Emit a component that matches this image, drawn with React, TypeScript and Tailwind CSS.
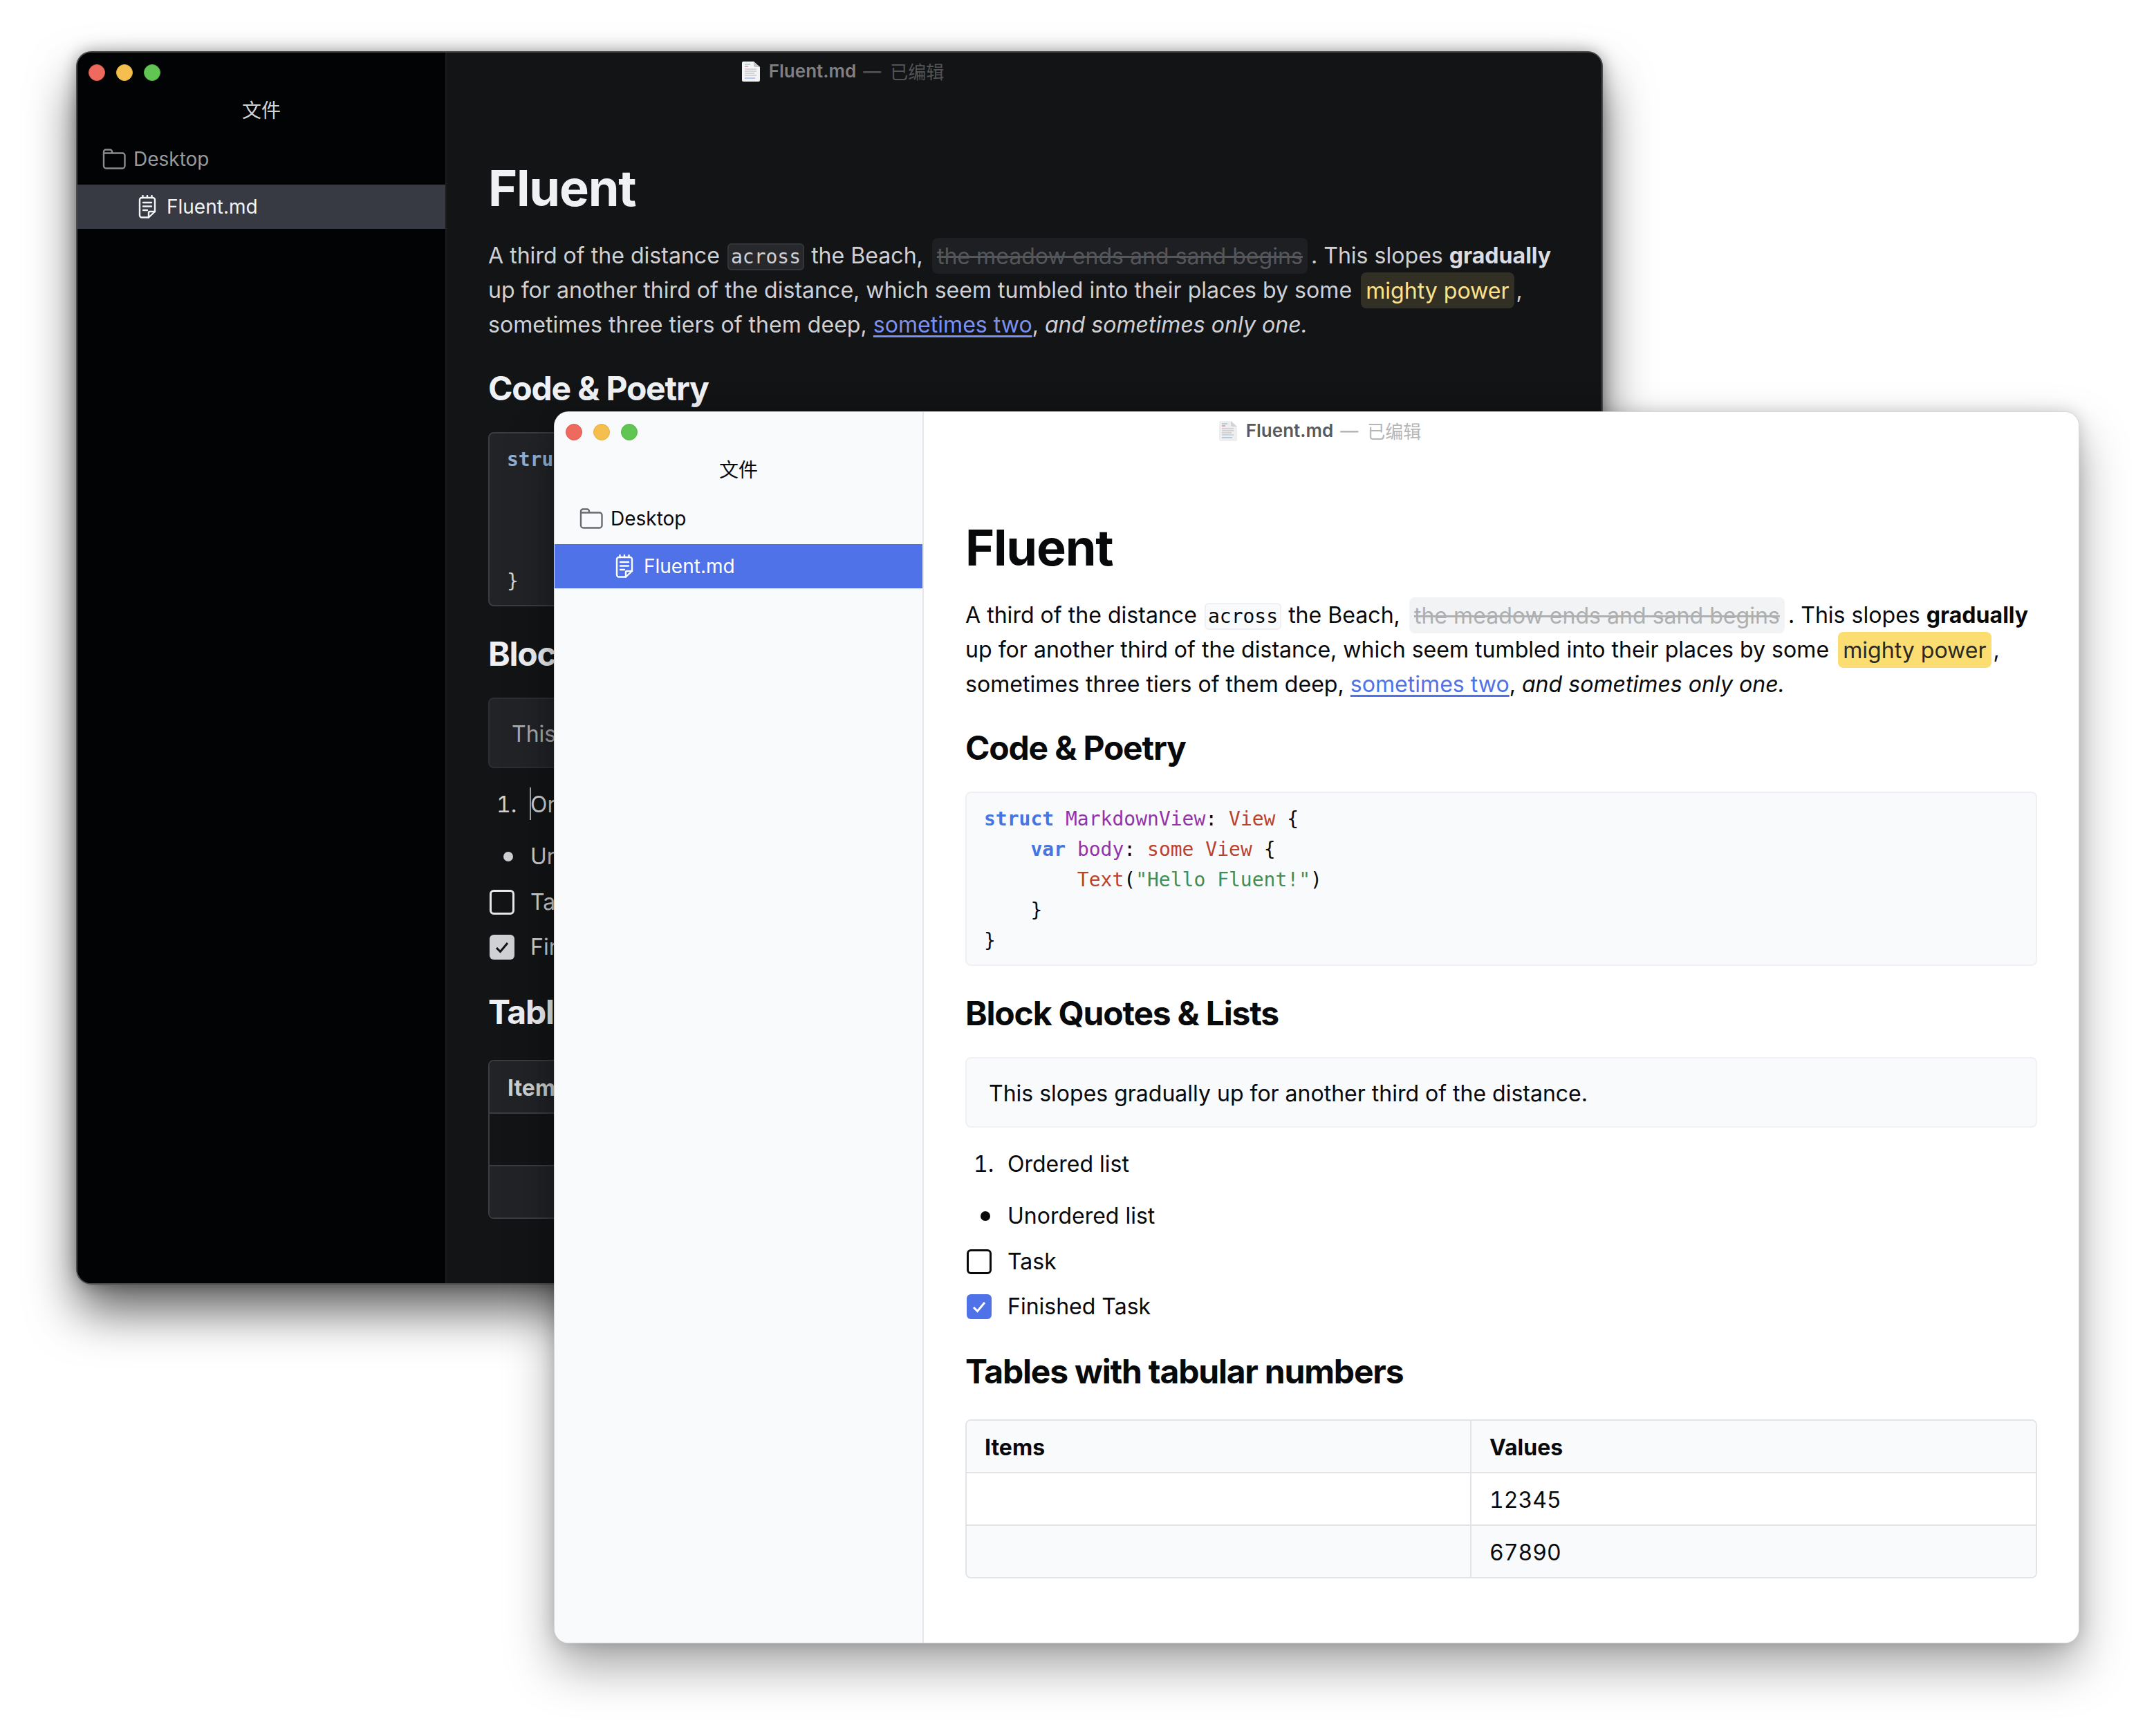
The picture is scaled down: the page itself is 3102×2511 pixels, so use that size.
import React from "react";

type Theme = "dark" | "light";

const styles = {
  dark: {
    win: "bg-[#131416] shadow-[0_40px_70px_rgba(0,0,0,0.62),0_0_24px_rgba(0,0,0,0.4)] ring-2 ring-[#4a4b4d]",
    side: "bg-[#020305] text-[#d2d3d5]",
    sideBorder: "border-[#1a1b1d]",
    muted: "text-[#98999b]",
    folder: "#8b8c8e",
    row: "bg-[#383a43] text-[#f2f3f5]",
    titleStrong: "text-[#808082]",
    titleMuted: "text-[#525356]",
    heading: "text-[#f0f1f4]",
    body: "text-[#cfd0d3]",
    strong: "text-[#dcdde0]",
    code: "bg-[#26282c] border-[#33353a] text-[#cfd0d3]",
    del: "bg-[#1e1f22] text-[#55565a]",
    mark: "bg-[#322f24] text-[#fbe28c]",
    link: "text-[#7b90ee] decoration-[#7b90ee]",
    pre: "bg-[#212327] border-[#3a3c42] text-[#cfd0d3]",
    kw: "font-bold text-[#8fb0d8]",
    type: "text-[#c99bd8]",
    ref: "text-[#e08f80]",
    str: "text-[#8cc09a]",
    quote: "bg-[#212327] border-[#2c2e33] text-[#a9aaad]",
    box: "border-[#e8e9ea]",
    checked: "bg-[#d0d1d4] text-[#131416]",
    table: "border-[#3a3c42]",
    head: "bg-[#212327]",
    alt: "bg-[#212327]",
    plain: "bg-[#131416]",
  },
  light: {
    win: "bg-white shadow-[0_34px_70px_rgba(0,0,0,0.36),0_0_24px_rgba(0,0,0,0.18)] ring-1 ring-[#d5d6d9]",
    side: "bg-[#f9fafc] text-[#08090b]",
    sideBorder: "border-[#e6e7ea]",
    muted: "text-[#08090b]",
    folder: "#6a6b70",
    row: "bg-[#4f72e9] text-white",
    titleStrong: "text-[#5a5a5d]",
    titleMuted: "text-[#b5b6b8]",
    heading: "text-[#08090b]",
    body: "text-[#08090b]",
    strong: "text-[#08090b]",
    code: "bg-[#f9fafc] border-[#eff0f3] text-[#08090b]",
    del: "bg-[#f2f3f4] text-[#aeafb1]",
    mark: "bg-[#fbdd72] text-[#2b2a22]",
    link: "text-[#4f72e9] decoration-[#4f72e9]",
    pre: "bg-[#f9fafc] border-[#eff0f3] text-[#08090b]",
    kw: "font-bold text-[#4575e0]",
    type: "text-[#9333a8]",
    ref: "text-[#b9432f]",
    str: "text-[#3f8f55]",
    quote: "bg-[#f9fafc] border-[#f0f1f4] text-[#08090b]",
    box: "border-[#08090b]",
    checked: "bg-[#4f72e9] text-white",
    table: "border-[#e3e4e8]",
    head: "bg-[#f9fafc]",
    alt: "bg-[#f9fafc]",
    plain: "bg-white",
  },
};

function TrafficLights() {
  return (
    <div className="flex gap-4 pl-4 pt-[17px]">
      <span className="h-6 w-6 rounded-full border border-[#e0594e] bg-[#ee6a5f]" />
      <span className="h-6 w-6 rounded-full border border-[#e5ad3c] bg-[#f5bf4f]" />
      <span className="h-6 w-6 rounded-full border border-[#53b546] bg-[#61c554]" />
    </div>
  );
}

function FolderIcon({ color }: { color: string }) {
  return (
    <svg width="34" height="30" viewBox="0 0 34 30" fill="none" stroke={color} strokeWidth="2.4">
      <path d="M2 6.5V4.5A3 3 0 0 1 5 1.5H11A3 3 0 0 1 14 4.5V6.5H29A3.5 3.5 0 0 1 32.5 10V25A3.5 3.5 0 0 1 29 28.5H5.5A3.5 3.5 0 0 1 2 25V6.5H14" strokeLinejoin="round" />
    </svg>
  );
}

function NoteIcon() {
  return (
    <svg width="26" height="34" viewBox="0 0 26 34" fill="none" stroke="currentColor" strokeWidth="2.4" strokeLinecap="round" strokeLinejoin="round">
      <path d="M5 4H21A3 3 0 0 1 24 7V24L15 32.5H5A3 3 0 0 1 2 29.5V7A3 3 0 0 1 5 4Z" />
      <path d="M24 24H16.5A1.5 1.5 0 0 0 15 25.5V32.5" />
      <path d="M6.5 1V4M13 1V4M19.5 1V4M7 11H19M7 16.5H19M7 22H13" />
    </svg>
  );
}

function TitleDoc({ theme }: { theme: Theme }) {
  return (
    <svg width="26" height="29" viewBox="0 0 26 29">
      <path d="M2 0H17L26 8V27A2 2 0 0 1 24 29H2A2 2 0 0 1 0 27V2A2 2 0 0 1 2 0Z" fill={theme === "dark" ? "#f3f3f4" : "#eeeeef"} />
      <path d="M17 0L26 8H19A2 2 0 0 1 17 6Z" fill={theme === "dark" ? "#c4c5c8" : "#d3d4d7"} />
      <path d="M4 4H12" stroke="#7fb2c8" strokeWidth="1.2" />
      <path d="M4 7H9" stroke="#d65a9a" strokeWidth="1.2" />
      <path d="M4 11H21M4 14H21M4 17H18M4 20H21" stroke="#b3b5bb" strokeWidth="1.2" />
      <path d="M4 24H19" stroke="#7a9be0" strokeWidth="1.2" />
    </svg>
  );
}

function Window({ theme, className }: { theme: Theme; className: string }) {
  const s = styles[theme];
  return (
    <div className={`absolute flex h-[1780px] w-[2204px] overflow-hidden rounded-[20px] font-['Inter',sans-serif] ${s.win} ${className}`}>
      {/* title sits over the two columns */}
      <div className="absolute left-0 right-0 top-[12px] flex items-center justify-center pl-[10px] text-[26px] leading-[30px]">
        <TitleDoc theme={theme} />
        <span className={`ml-[13px] font-semibold ${s.titleStrong}`}>Fluent.md</span>
        <span className={`ml-[10px] font-medium ${s.titleMuted}`}>—</span>
        <span className={`ml-[13px] font-['Noto_Sans_CJK_SC',sans-serif] ${s.titleMuted}`}>已编辑</span>
      </div>

      {/* sidebar */}
      <aside className={`w-[534px] shrink-0 border-r-2 ${s.sideBorder} ${s.side}`}>
        <TrafficLights />
        <div className="mt-[23px] text-center text-[28px] leading-[36px] font-['Noto_Sans_CJK_SC',sans-serif]">文件</div>
        <div className={`mt-[36px] flex h-[36px] items-center gap-[11px] pl-[36px] text-[28px] ${s.muted}`}>
          <FolderIcon color={s.folder} />
          <span>Desktop</span>
        </div>
        <div className={`mt-[19px] flex h-[64px] items-center gap-[15px] pl-[88px] text-[28px] ${s.row}`}>
          <NoteIcon />
          <span>Fluent.md</span>
        </div>
      </aside>

      {/* document */}
      <main className={`min-w-0 flex-1 px-[60px] ${s.plain}`}>
        <h1 className={`mt-[152px] text-[72px] leading-[88px] font-bold tracking-[-1.2px] ${s.heading}`}>Fluent</h1>

        <p className={`mt-[29px] text-[32.1px] leading-[50px] ${s.body}`}>
          A third of the distance{" "}
          <code className={`ml-[2px] mr-[1px] rounded-[6px] border-2 px-[3px] py-[1px] font-['DejaVu_Sans_Mono',monospace] text-[28px] leading-none ${s.code}`}>across</code>{" "}
          the Beach,{" "}
          <span className={`ml-[4px] mr-[5px] rounded-[8px] px-[7px] py-[6.5px] line-through ${s.del}`}>the meadow ends and sand begins</span>
          . This slopes <strong className={`font-bold ${s.strong}`}>gradually</strong> up for another third of the distance, which seem tumbled into their places by some{" "}
          <mark className={`ml-[4px] mr-[3px] rounded-[8px] px-[7px] py-[6.5px] ${s.mark}`}>mighty power</mark>, sometimes three tiers of them deep,{" "}
          <a className={`underline underline-offset-[4px] ${s.link}`}>sometimes two</a>, <em>and sometimes only one.</em>
        </p>

        <h2 className={`mt-[35px] text-[48px] leading-[64px] font-bold tracking-[-1.2px] ${s.heading}`}>Code &amp; Poetry</h2>

        <pre className={`mt-[31px] rounded-[8px] border-2 px-[25px] pb-[12px] pt-[16px] font-['DejaVu_Sans_Mono',monospace] text-[28px] leading-[44px] ${s.pre}`}>
          <span className={s.kw}>struct</span> <span className={s.type}>MarkdownView</span>: <span className={s.ref}>View</span> {"{\n"}
          {"    "}<span className={s.kw}>var</span> <span className={s.type}>body</span>: <span className={s.ref}>some</span> <span className={s.ref}>View</span> {"{\n"}
          {"        "}<span className={s.ref}>Text</span>(<span className={s.str}>"Hello Fluent!"</span>){"\n"}
          {"    }\n"}
          {"}"}
        </pre>

        <h2 className={`mt-[37px] text-[48px] leading-[64px] font-bold tracking-[-1.2px] ${s.heading}`}>Block Quotes &amp; Lists</h2>

        <blockquote className={`mt-[31px] flex h-[102px] items-center rounded-[8px] border-2 px-[32px] pt-[3px] text-[32px] ${s.quote}`}>
          This slopes gradually up for another third of the distance.
        </blockquote>

        <div className={`mt-[28px] text-[32px] leading-[50px] ${s.body}`}>
          <div className="relative flex items-center pl-[61px]">
            <span className="absolute left-[12px] tabular-nums">1.</span>
            {theme === "dark" && <span className="absolute left-[60px] top-[0px] h-[47px] w-[2px] bg-[#a5a6a9]" />}
            <span>Ordered list</span>
          </div>
          <div className="relative mt-[25px] flex items-center pl-[61px]">
            <span className="absolute left-[22px] h-[14px] w-[14px] rounded-full bg-current" />
            <span>Unordered list</span>
          </div>
          <div className="mt-[16px] flex items-center gap-[23px] pl-[2px]">
            <span className={`h-[36px] w-[36px] rounded-[6px] border-[3px] ${s.box}`} />
            <span>Task</span>
          </div>
          <div className="mt-[15px] flex items-center gap-[23px] pl-[2px]">
            <span className={`flex h-[36px] w-[36px] items-center justify-center rounded-[6px] ${s.checked}`}>
              <svg width="26" height="26" viewBox="0 0 26 26" fill="none" stroke="currentColor" strokeWidth="3">
                <path d="M5 14L10.5 19.5L21 7" />
              </svg>
            </span>
            <span>Finished Task</span>
          </div>
        </div>

        <h2 className={`mt-[37px] text-[48px] leading-[64px] font-bold tracking-[-1.2px] ${s.heading}`}>Tables with tabular numbers</h2>

        <div className={`mt-[37px] overflow-hidden rounded-[8px] border-2 text-[32px] ${s.table} ${s.body}`}>
          <div className={`grid h-[74px] grid-cols-[730px_1fr] items-stretch font-bold ${s.head}`}>
            <div className={`flex items-center border-r-2 pl-[26px] pt-[3px] ${s.table}`}>Items</div>
            <div className="flex items-center pl-[26px] pt-[3px]">Values</div>
          </div>
          <div className={`grid h-[76px] grid-cols-[730px_1fr] border-t-2 ${s.table} ${s.plain}`}>
            <div className={`border-r-2 ${s.table}`} />
            <div className="flex items-center pl-[26px] pt-[3px] tabular-nums">12345</div>
          </div>
          <div className={`grid h-[76px] grid-cols-[730px_1fr] border-t-2 ${s.table} ${s.alt}`}>
            <div className={`border-r-2 ${s.table}`} />
            <div className="flex items-center pl-[26px] pt-[3px] tabular-nums">67890</div>
          </div>
        </div>
      </main>
    </div>
  );
}

export default function App() {
  return (
    <div className="relative h-[2511px] w-[3102px] overflow-hidden bg-white">
      <Window theme="dark" className="left-[112px] top-[76px]" />
      <Window theme="light" className="left-[802px] top-[596px]" />
    </div>
  );
}
